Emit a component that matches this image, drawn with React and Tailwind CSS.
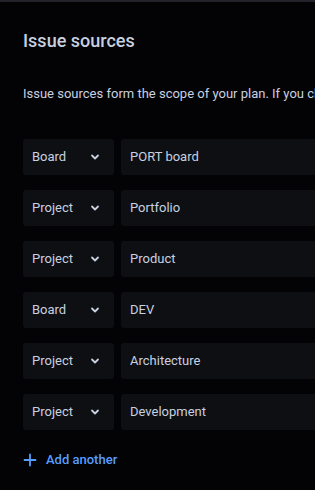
import React from "react";

const rows = [
  ["Board", "PORT board"],
  ["Project", "Portfolio"],
  ["Project", "Product"],
  ["Board", "DEV"],
  ["Project", "Architecture"],
  ["Project", "Development"],
];

function Chevron() {
  return (
    <svg width="12" height="12" viewBox="0 0 12 12" fill="none">
      <path d="M3 4.5 L6 7.5 L9 4.5" stroke="#c7d1e0" strokeWidth="1.8" strokeLinecap="round" strokeLinejoin="round" />
    </svg>
  );
}

export default function App() {
  return (
    <div className="w-[315px] h-[490px] overflow-hidden bg-[#030305] text-[#c7d1e0]" style={{ fontFamily: "Roboto, 'Liberation Sans', sans-serif" }}>
      <div className="h-[2px] bg-[#23232b]" />
      <div className="pl-[23px]">
        <h1 className="mt-[28px] text-[18px] leading-[22px] font-medium whitespace-nowrap">Issue sources</h1>
        <p className="mt-[32px] text-[13px] leading-[20px] whitespace-nowrap">
          Issue sources form the scope of your plan. If you change your mind later, you can edit them.
        </p>
        <div className="mt-[35px] flex flex-col gap-[15px]">
          {rows.map(([t, v], i) => (
            <div key={i} className="flex gap-[7px] h-[36px]">
              <div className="w-[91px] shrink-0 rounded-[3px] bg-[#0e0f12] flex items-center justify-between pl-[9px] pr-[13px] text-[13px]">
                <span>{t}</span>
                <Chevron />
              </div>
              <div className="w-[300px] shrink-0 rounded-[3px] bg-[#0e0f12] flex items-center pl-[9px] text-[13px]">
                {v}
              </div>
            </div>
          ))}
        </div>
        <div className="mt-[20px] flex items-center gap-[9px] text-[#579dff] text-[13px] font-medium">
          <svg width="14" height="14" viewBox="0 0 14 14" fill="none">
            <path d="M7 1.5 V12.5 M1.5 7 H12.5" stroke="#579dff" strokeWidth="1.8" strokeLinecap="round" />
          </svg>
          <span>Add another</span>
        </div>
      </div>
    </div>
  );
}
